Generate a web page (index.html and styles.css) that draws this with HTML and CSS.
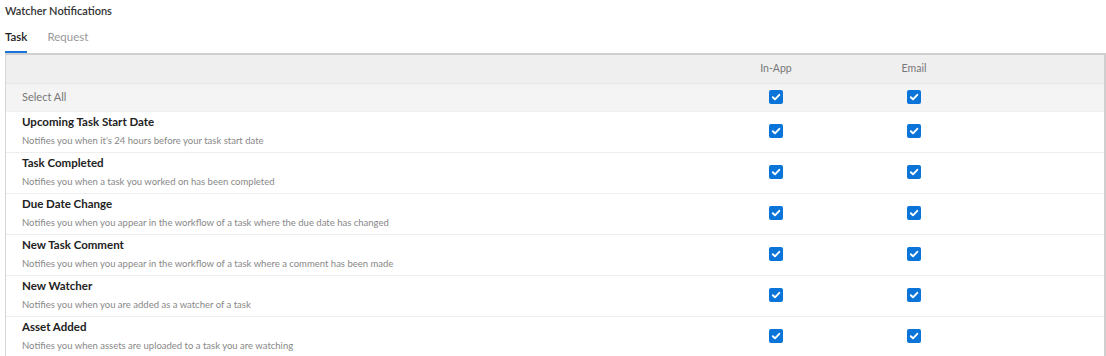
FILE: index.html
```html
<!DOCTYPE html>
<html>
<head>
<meta charset="utf-8">
<link rel="stylesheet" href="styles.css">
</head>
<body>
<div class="page">
  <h1 class="title">Watcher Notifications</h1>
  <div class="tabs">
    <div class="tab active">Task</div>
    <div class="tab">Request</div>
  </div>
  <div class="table">
    <div class="row head">
      <div class="cell name"></div>
      <div class="cell col">In-App</div>
      <div class="cell col">Email</div>
      <div class="cell"></div>
    </div>
    <div class="row all">
      <div class="cell name">Select All</div>
      <div class="cell col"><span class="cb"><svg viewBox="0 0 14 14"><path d="M3.8 7.2 L6 9.3 L10.3 4.8" /></svg></span></div>
      <div class="cell col"><span class="cb"><svg viewBox="0 0 14 14"><path d="M3.8 7.2 L6 9.3 L10.3 4.8" /></svg></span></div>
      <div class="cell"></div>
    </div>
    <div class="row item">
      <div class="cell name"><div class="t">Upcoming Task Start Date</div><div class="d">Notifies you when it's 24 hours before your task start date</div></div>
      <div class="cell col"><span class="cb"><svg viewBox="0 0 14 14"><path d="M3.8 7.2 L6 9.3 L10.3 4.8" /></svg></span></div>
      <div class="cell col"><span class="cb"><svg viewBox="0 0 14 14"><path d="M3.8 7.2 L6 9.3 L10.3 4.8" /></svg></span></div>
      <div class="cell"></div>
    </div>
    <div class="row item">
      <div class="cell name"><div class="t">Task Completed</div><div class="d">Notifies you when a task you worked on has been completed</div></div>
      <div class="cell col"><span class="cb"><svg viewBox="0 0 14 14"><path d="M3.8 7.2 L6 9.3 L10.3 4.8" /></svg></span></div>
      <div class="cell col"><span class="cb"><svg viewBox="0 0 14 14"><path d="M3.8 7.2 L6 9.3 L10.3 4.8" /></svg></span></div>
      <div class="cell"></div>
    </div>
    <div class="row item">
      <div class="cell name"><div class="t">Due Date Change</div><div class="d">Notifies you when you appear in the workflow of a task where the due date has changed</div></div>
      <div class="cell col"><span class="cb"><svg viewBox="0 0 14 14"><path d="M3.8 7.2 L6 9.3 L10.3 4.8" /></svg></span></div>
      <div class="cell col"><span class="cb"><svg viewBox="0 0 14 14"><path d="M3.8 7.2 L6 9.3 L10.3 4.8" /></svg></span></div>
      <div class="cell"></div>
    </div>
    <div class="row item">
      <div class="cell name"><div class="t">New Task Comment</div><div class="d">Notifies you when you appear in the workflow of a task where a comment has been made</div></div>
      <div class="cell col"><span class="cb"><svg viewBox="0 0 14 14"><path d="M3.8 7.2 L6 9.3 L10.3 4.8" /></svg></span></div>
      <div class="cell col"><span class="cb"><svg viewBox="0 0 14 14"><path d="M3.8 7.2 L6 9.3 L10.3 4.8" /></svg></span></div>
      <div class="cell"></div>
    </div>
    <div class="row item">
      <div class="cell name"><div class="t">New Watcher</div><div class="d">Notifies you when you are added as a watcher of a task</div></div>
      <div class="cell col"><span class="cb"><svg viewBox="0 0 14 14"><path d="M3.8 7.2 L6 9.3 L10.3 4.8" /></svg></span></div>
      <div class="cell col"><span class="cb"><svg viewBox="0 0 14 14"><path d="M3.8 7.2 L6 9.3 L10.3 4.8" /></svg></span></div>
      <div class="cell"></div>
    </div>
    <div class="row item">
      <div class="cell name"><div class="t">Asset Added</div><div class="d">Notifies you when assets are uploaded to a task you are watching</div></div>
      <div class="cell col"><span class="cb"><svg viewBox="0 0 14 14"><path d="M3.8 7.2 L6 9.3 L10.3 4.8" /></svg></span></div>
      <div class="cell col"><span class="cb"><svg viewBox="0 0 14 14"><path d="M3.8 7.2 L6 9.3 L10.3 4.8" /></svg></span></div>
      <div class="cell"></div>
    </div>
  </div>
</div>
</body>
</html>
```

FILE: styles.css
```css
html, body {
  margin: 0;
  padding: 0;
  background: #fff;
}
body {
  font-family: "Lato", "Liberation Sans", sans-serif;
  color: #222;
}
.page {
  padding: 4px 0 0 5px;
}
.title {
  margin: 0;
  font-size: 11px;
  line-height: 13px;
  font-weight: 600;
  color: #333;
}
.tabs {
  display: flex;
  gap: 20px;
  margin-top: 13px;
}
.tab {
  font-size: 11.5px;
  line-height: 13px;
  padding-bottom: 8px;
  border-bottom: 2px solid transparent;
  color: #999;
}
.tab.active {
  color: #222;
  font-weight: 600;
  border-bottom-color: #1a73d9;
}
.table {
  border-top: 2px solid #cfcfcf;
  border-left: 1px solid #d6d6d6;
  border-right: 2px solid #cfcfcf;
}
.row {
  display: grid;
  grid-template-columns: 701px 138px 138px 1fr;
  align-items: center;
  box-sizing: border-box;
}
.cell.name {
  padding-left: 16px;
}
.cell.col {
  display: flex;
  justify-content: center;
}
.head {
  height: 28px;
  padding-bottom: 2px;
  background: #efefef;
  font-size: 10.5px;
  color: #777;
}
.all {
  height: 28px;
  padding-bottom: 2px;
  background: #f4f4f4;
  font-size: 11px;
  color: #777;
  border-top: 1px solid #e6e6e6;
}
.item {
  height: 41px;
  border-top: 1px solid #eeeeee;
  padding-bottom: 3px;
}
.item .t {
  font-size: 11.5px;
  line-height: 13px;
  font-weight: 700;
  color: #222;
}
.item .d {
  font-size: 9.5px;
  line-height: 11px;
  margin-top: 7px;
  color: #888;
}
.cb {
  display: block;
  width: 14px;
  height: 14px;
  border-radius: 2px;
  background: #0b74d8;
}
.cb svg {
  display: block;
  width: 14px;
  height: 14px;
}
.cb path {
  fill: none;
  stroke: #fff;
  stroke-width: 1.9;
  stroke-linecap: round;
  stroke-linejoin: round;
}
```
